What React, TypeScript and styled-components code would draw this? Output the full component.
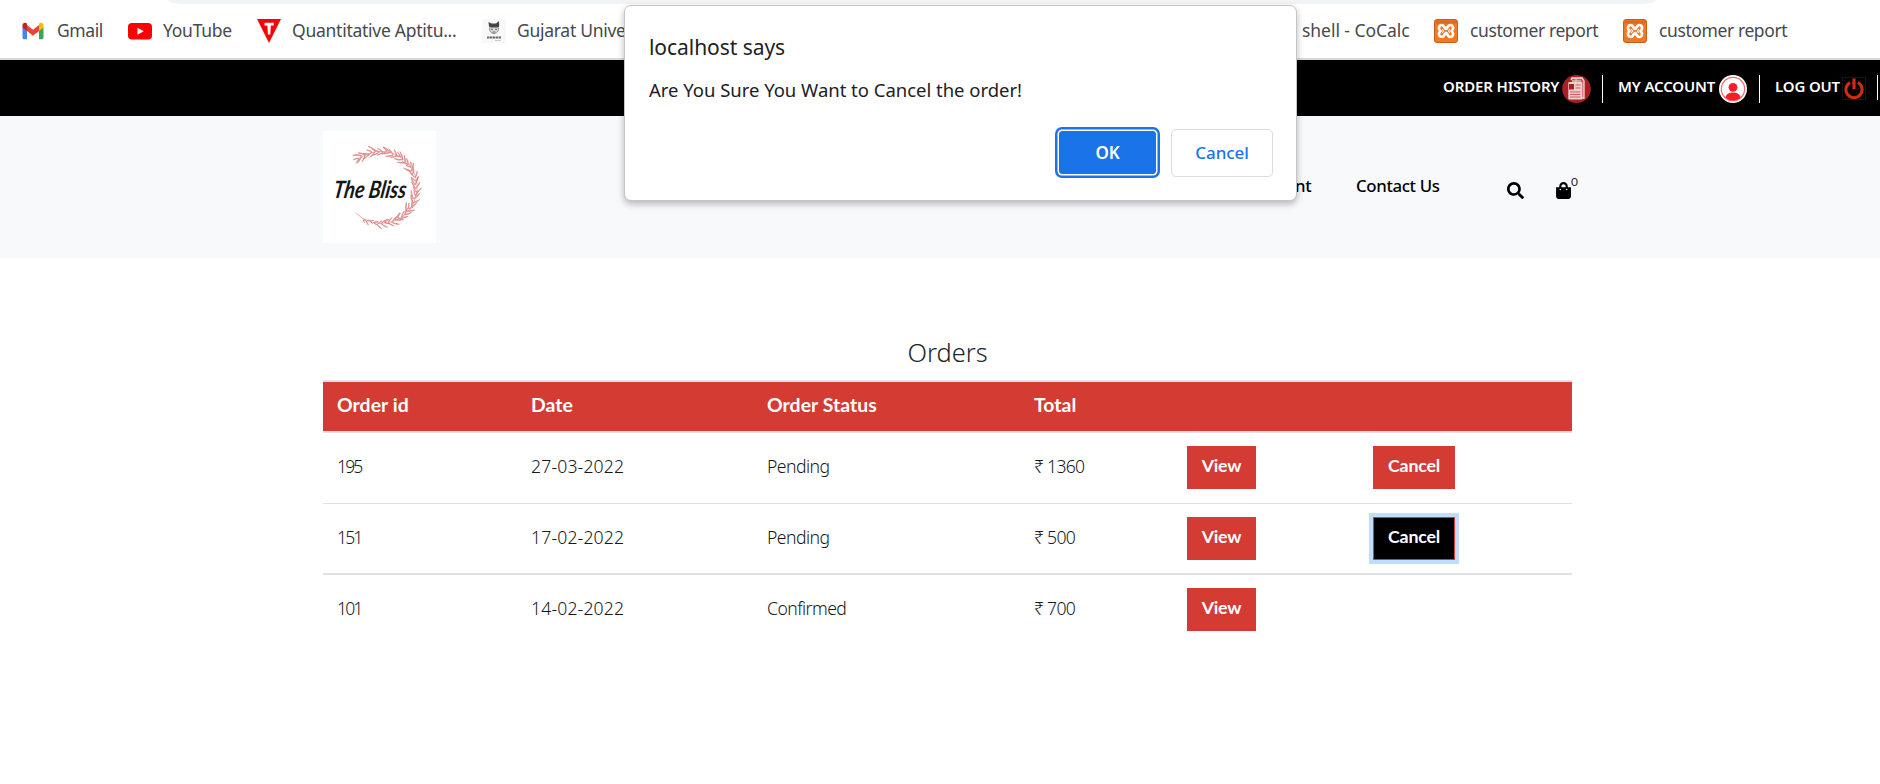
import React from "react";
import styled, { createGlobalStyle, css } from "styled-components";
import { FaSearch, FaShoppingBag } from "react-icons/fa";

const GlobalStyle = createGlobalStyle`
  * { box-sizing: border-box; }
  body { margin: 0; background: #fff; color: #212529; font-family: Lato, "Open Sans", sans-serif; overflow: hidden; }
`;

const ui = `"Noto Sans", "Open Sans", sans-serif`;

const Page = styled.div`
  position: relative;
  width: 1880px;
  height: 784px;
  overflow: hidden;
`;

/* Browser strip */
const BrowserBar = styled.div`
  display: flex;
  flex-direction: column;
  height: 60px;
  border-bottom: 2px solid #d9d9d9;
`;
const AddressEdge = styled.div`
  height: 4px;
  margin: 0 224px 0 168px;
  background: #f1f3f4;
  border-radius: 0 0 16px 16px / 0 0 4px 4px;
`;
const Bookmarks = styled.div`
  flex: 1;
  display: flex;
  justify-content: space-between;
  padding: 0 93px 0 21px;
`;
const BookmarkGroup = styled.div`
  display: flex;
  align-items: center;
  gap: 26px;
`;
const Bookmark = styled.div<{ $gap?: number }>`
  display: flex;
  align-items: center;
  gap: ${(p) => p.$gap ?? 11}px;
  svg { display: block; flex: none; }
`;
const BookmarkLabel = styled.span<{ $w: number; $ls?: number }>`
  width: ${(p) => p.$w}px;
  margin-top: -2px;
  font: 400 17.5px/24px ${ui};
  letter-spacing: ${(p) => p.$ls ?? -0.4}px;
  color: #46494d;
  white-space: nowrap;
`;

/* Account strip */
const TopBar = styled.div`
  display: flex;
  justify-content: flex-end;
  height: 56px;
  padding: 15px 2px 0 0;
  background: #000;
`;
const TopLink = styled.a<{ $w: number; $indent?: number; $short?: boolean }>`
  display: flex;
  align-items: flex-start;
  width: ${(p) => p.$w}px;
  height: ${(p) => (p.$short ? 25 : 28)}px;
  padding-left: ${(p) => p.$indent ?? 0}px;
  border-right: 1.5px solid #fff;
  color: #fff;
  svg { display: block; flex: none; margin-top: ${(p) => (p.$short ? 2 : 0)}px; }
`;
const TopLabel = styled.span<{ $w: number }>`
  width: ${(p) => p.$w}px;
  margin-top: -1px;
  font: 600 15px/24px ${ui};
  letter-spacing: -0.15px;
  white-space: nowrap;
`;

/* Site header */
const Header = styled.header`
  display: flex;
  height: 142px;
  padding: 15px 302px 0 323px;
  background: #f8f9fb;
`;
const Logo = styled.div`
  width: 113px;
  height: 112px;
  background: #fff;
`;
const Nav = styled.nav`
  display: flex;
  align-items: flex-start;
  margin-left: auto;
  padding-top: 43px;
`;
const NavLink = styled.a<{ $w: number }>`
  width: ${(p) => p.$w}px;
  font: 500 16.8px/24px ${ui};
  letter-spacing: -0.35px;
  color: #000;
  white-space: nowrap;
`;
const IconLink = styled.a<{ $w: number }>`
  display: flex;
  width: ${(p) => p.$w}px;
  padding-top: 8px;
  color: #000;
`;
const CartCount = styled.sup`
  margin-top: -7px;
  font: 400 12px/14px Lato, sans-serif;
  color: #212529;
`;

/* Orders */
const Content = styled.main`
  width: 1249px;
  margin: 78px 0 0 323px;
`;
const Title = styled.h4`
  margin: 0 0 12px;
  font: 300 25.4px/32px ${ui};
  text-align: center;
`;
const Table = styled.table`
  width: 100%;
  table-layout: fixed;
  border-collapse: separate;
  border-spacing: 0;
`;
const HeadCell = styled.th<{ $w: number }>`
  width: ${(p) => p.$w}px;
  height: 53px;
  padding: 0 14px 4px;
  border-top: 2px solid #dee2e6;
  border-bottom: 2px solid #dee2e6;
  background: #d43b33;
  background-clip: padding-box;
  color: #fff;
  font: 700 19.4px/24px Lato, sans-serif;
  letter-spacing: 0.05px;
  text-align: left;
`;
const Cell = styled.td<{ $line: number; $ls?: number }>`
  height: ${(p) => 70 + p.$line - (p.$line === 1 ? 1 : 0)}px;
  padding: 13px 14px 0;
  vertical-align: top;
  ${(p) => p.$line > 0 && css`border-top: ${p.$line}px solid #dee2e6;`}
  color: #16191c;
  font: 300 17.6px/40px ${ui};
  letter-spacing: ${(p) => p.$ls ?? -0.55}px;
  white-space: nowrap;
`;
const OrderButton = styled.button<{ $w: number; $focused?: boolean }>`
  display: block;
  width: ${(p) => p.$w}px;
  height: 43px;
  padding: 0 0 5px;
  border: 1px solid #d43b33;
  background: ${(p) => (p.$focused ? "#000" : "#d43b33")};
  box-shadow: ${(p) => (p.$focused ? "0 0 0 4px #bfdeff" : "none")};
  color: #fff;
  font: 700 17.8px/24px Lato, sans-serif;
  letter-spacing: -0.2px;
`;

/* Confirm dialog */
const Dialog = styled.div`
  position: absolute;
  left: 624px;
  top: 5px;
  width: 673px;
  height: 196px;
  padding: 26px 23px 0 24px;
  display: flex;
  flex-direction: column;
  border: 1px solid #c3c6c8;
  border-radius: 7px;
  background: #fff;
  box-shadow: 0 3px 7px rgba(0, 0, 0, 0.28);
  color: #202124;
  font-family: ${ui};
`;
const DialogTitle = styled.div`
  font-size: 21px;
  line-height: 30px;
  letter-spacing: -0.05px;
`;
const DialogText = styled.div`
  margin-top: 15px;
  font-size: 18.5px;
  line-height: 26px;
  letter-spacing: -0.02px;
`;
const DialogActions = styled.div`
  display: flex;
  justify-content: flex-end;
  gap: 15px;
  margin-top: 26px;
`;
const DialogButton = styled.button<{ $primary?: boolean }>`
  width: 102px;
  height: 48px;
  padding: 0;
  border: 1px solid #dadce0;
  border-radius: 5px;
  background: #fff;
  color: #1a73e8;
  font: 500 17px/24px ${ui};
  letter-spacing: -0.1px;
  ${(p) =>
    p.$primary &&
    css`
      width: 97px;
      height: 43px;
      margin: 2px 0;
      border-color: #1a73e8;
      border-radius: 3px;
      background: #1a73e8;
      box-shadow: 0 0 0 1.5px #fff, 0 0 0 4px #1a73e8;
      color: #fff;
      font-weight: 600;
    `}
`;

const GmailIcon = () => (
  <svg width="24" height="24" viewBox="0 0 24 24">
    <path d="M1.5 8v10.8c0 .8.6 1.4 1.4 1.4H6V9z" fill="#4285f4" />
    <path d="M22.5 8v10.8c0 .8-.6 1.4-1.4 1.4H18V9z" fill="#34a853" />
    <path d="M6 6l6 4.8L18 6v6l-6 4.8L6 12z" fill="#ea4335" />
    <path d="M1.5 8.6V6.4c0-2.6 2.6-3.4 4.5-1.8V12z" fill="#c5221f" />
    <path d="M22.5 8.6V6.4c0-2.6-2.6-3.4-4.5-1.8V12z" fill="#fbbc04" />
  </svg>
);
const YouTubeIcon = () => (
  <svg width="24" height="24" viewBox="0 0 24 24">
    <rect y="4" width="24" height="16.5" rx="4" fill="#f00" />
    <path d="M9.5 8.7v7l6.2-3.5z" fill="#fff" />
  </svg>
);
const TriangleIcon = () => (
  <svg width="24" height="24" viewBox="0 0 24 24">
    <path d="M0 0h24L12 24z" fill="#f50404" />
    <path d="M7.5 3.8h9.2v2.8h-2.9l-.5 9h-2.4l-.5-9H7.5z" fill="#fff" />
  </svg>
);
const UniversityIcon = () => (
  <svg width="24" height="24" viewBox="0 0 24 24">
    <rect width="24" height="24" fill="#f8f8f8" />
    <path d="M7 7.5L6.5 3l3 1.5H14L17 2l.2 5.5-2 1.5H9z" fill="#444" />
    <path d="M7.5 8.5c0 4 2 6 4.5 6s4.5-2 4.5-6" fill="#ddd" stroke="#888" />
    <path d="M9 10.3h2M13 10.3h2M10.5 13h3" stroke="#666" />
    <path d="M5 18.5h14" stroke="#666" strokeWidth="2" strokeDasharray="2.4 .5" />
    <path d="M13 21.5h6" stroke="#ccc" />
  </svg>
);
const XamppIcon = () => (
  <svg width="24" height="24" viewBox="0 0 24 24">
    <rect x="0.5" y="0.5" width="23" height="23" rx="2.5" fill="#f5771f" stroke="#c4601c" />
    <path d="M1.5 1.5h21v3h-21z" fill="#dd6a20" />
    <g fill="none" stroke="#fff" strokeWidth="2.7" strokeLinecap="round" strokeLinejoin="round">
      <path d="M12 9.8C10.500 9.800 10.300 6 7.800 6S4.400 9 5.200 10.200L6.500 12l-1.300 1.800C4.400 15 5.300 18 7.800 18s2.700-3.800 4.200-3.800" />
      <path d="M12 9.800C13.500 9.800 13.700 6 16.200 6s3.400 3 2.600 4.200L17.500 12l1.300 1.800c.8 1.200-.1 4.200-2.600 4.200s-2.700-3.800-4.200-3.800" />
      <path d="M8.500 10.500l1 1.500-1 1.500M15.500 10.500l-1 1.500 1 1.500" strokeWidth="1.200" />
    </g>
  </svg>
);
const HistoryIcon = () => (
  <svg width="29" height="28" viewBox="0 0 29 28">
    <ellipse cx="14.5" cy="14" rx="14.3" ry="14" fill="#a82024" />
    <path d="M9 5l1-2h10l2 3v17h-2" fill="#c45b5d" stroke="#f4dcdc" strokeWidth="1.3" />
    <rect x="6.3" y="7" width="14" height="17.5" rx="1" fill="#f0cfcf" />
    <rect x="7" y="9" width="5" height="5.5" fill="#a82024" />
    <path d="M13.5 10h5M13.5 13h5M8 17h10.500M8 19.500h10.500M8 22h10.500" stroke="#c45b5d" strokeWidth="1.1" />
    <path d="M10 6h9M14 4v3" stroke="#f4dcdc" />
  </svg>
);
const AccountIcon = () => (
  <svg width="28" height="28" viewBox="0 0 28 28">
    <circle cx="14" cy="14" r="14" fill="#fff" />
    <circle cx="14" cy="14" r="11.7" fill="#fff" stroke="#f4676c" strokeWidth="1.2" />
    <circle cx="14" cy="12.3" r="4.4" fill="#fb1d26" />
    <path d="M6.5 22.5c.5-3.5 3.5-5 7.5-5s7 1.5 7.5 5c-4 3.800-11 3.800-15 0z" fill="#fb1d26" />
  </svg>
);
const PowerIcon = () => (
  <svg width="24" height="24" viewBox="0 0 24 24">
    <rect x="0.5" y="0.5" width="23" height="22" fill="none" stroke="#151515" />
    <path d="M8 5.5a8.100 8.100 0 1 0 8 0" fill="none" stroke="#d42a14" strokeWidth="3" />
    <path d="M12 1.5v10.5" stroke="#d42a14" strokeWidth="3.2" />
  </svg>
);

/* Open ring of leaf sprigs, drawn pair by pair along the arc */
const Wreath = () => {
  const leaves: string[] = [];
  for (let i = 0; i <= 42; i++) {
    const a = ((-126 + i * 5.8) * Math.PI) / 180;
    const r = 36 + Math.sin(i * 1.7);
    const x = 57 + r * Math.cos(a);
    const y = 56.5 + r * Math.sin(a);
    const taper = i > 36 ? 1 - (i - 36) * 0.1 : 1;
    for (const side of [-1, 1]) {
      const len = (5.6 + ((i * 7) % 4)) * taper;
      const back = a - Math.PI / 2 + side * (0.4 + (i % 3) * 0.15);
      const bend = back + side * 0.35;
      leaves.push(
        `M${x.toFixed(1)} ${y.toFixed(1)}Q${(x + len * 0.6 * Math.cos(bend)).toFixed(1)} ${(y + len * 0.6 * Math.sin(bend)).toFixed(1)} ${(x + len * Math.cos(back)).toFixed(1)} ${(y + len * Math.sin(back)).toFixed(1)}Z`
      );
    }
  }
  return (
    <>
      <path d="M36 28A36 36 0 1 1 33 82" fill="none" stroke="#e09595" strokeWidth="0.8" />
      <path d={leaves.join("")} fill="#efb9b9" stroke="#dc8585" strokeWidth="0.7" />
    </>
  );
};
const BlissLogo = () => (
  <svg width="113" height="112" viewBox="0 0 113 112">
    <Wreath />
    <text
      x="10"
      y="67"
      textLength="73"
      lengthAdjust="spacingAndGlyphs"
      transform="skewX(-9) translate(10 0)"
      fontFamily="Lato, sans-serif"
      fontStyle="italic"
      fontWeight="700"
      fontSize="24"
      fill="#161616"
      stroke="#fff"
      strokeWidth="1.5"
      paintOrder="stroke"
    >
      The Bliss
    </text>
  </svg>
);

const columns = [
  { label: "Order id", w: 194 },
  { label: "Date", w: 236 },
  { label: "Order Status", w: 267 },
  { label: "Total", w: 153 },
  { label: "", w: 186 },
  { label: "", w: 213 },
];
const orders = [
  { id: "195", date: "27-03-2022", status: "Pending", total: "₹ 1360", line: 0, cancel: true, focused: false },
  { id: "151", date: "17-02-2022", status: "Pending", total: "₹ 500", line: 1, cancel: true, focused: true },
  { id: "101", date: "14-02-2022", status: "Confirmed", total: "₹ 700", line: 2, cancel: false, focused: false },
];

export default function App() {
  return (
    <Page>
      <GlobalStyle />
      <BrowserBar>
        <AddressEdge />
        <Bookmarks>
          <BookmarkGroup>
            <Bookmark $gap={12}><GmailIcon /><BookmarkLabel $w={45} $ls={-0.4}>Gmail</BookmarkLabel></Bookmark>
            <Bookmark><YouTubeIcon /><BookmarkLabel $w={68} $ls={-0.25}>YouTube</BookmarkLabel></Bookmark>
            <Bookmark><TriangleIcon /><BookmarkLabel $w={164} $ls={-0.26}>Quantitative Aptitu...</BookmarkLabel></Bookmark>
            <Bookmark><UniversityIcon /><BookmarkLabel $w={107} $ls={-0.28}>Gujarat Unive</BookmarkLabel></Bookmark>
          </BookmarkGroup>
          <BookmarkGroup>
            <Bookmark><BookmarkLabel $w={106} $ls={-0.05}>shell - CoCalc</BookmarkLabel></Bookmark>
            <Bookmark $gap={12}><XamppIcon /><BookmarkLabel $w={127}>customer report</BookmarkLabel></Bookmark>
            <Bookmark $gap={12}><XamppIcon /><BookmarkLabel $w={128}>customer report</BookmarkLabel></Bookmark>
          </BookmarkGroup>
        </Bookmarks>
      </BrowserBar>

      <TopBar>
        <TopLink $w={160}><TopLabel $w={119}>ORDER HISTORY</TopLabel><HistoryIcon /></TopLink>
        <TopLink $w={157} $indent={15}><TopLabel $w={101}>MY ACCOUNT</TopLabel><AccountIcon /></TopLink>
        <TopLink $w={118} $indent={15} $short><TopLabel $w={67}>LOG OUT</TopLabel><PowerIcon /></TopLink>
      </TopBar>

      <Header>
        <Logo><BlissLogo /></Logo>
        <Nav>
          <NavLink $w={61}>nt</NavLink>
          <NavLink $w={151}>Contact Us</NavLink>
          <IconLink $w={49}><FaSearch size={17} /></IconLink>
          <IconLink $w={22}><FaShoppingBag size={17} /><CartCount>0</CartCount></IconLink>
        </Nav>
      </Header>

      <Content>
        <Title>Orders</Title>
        <Table>
          <thead>
            <tr>{columns.map((c, i) => <HeadCell key={i} $w={c.w}>{c.label}</HeadCell>)}</tr>
          </thead>
          <tbody>
            {orders.map((o) => (
              <tr key={o.id}>
                <Cell $line={o.line} $ls={-1.9}>{o.id}</Cell>
                <Cell $line={o.line} $ls={0.15}>{o.date}</Cell>
                <Cell $line={o.line}>{o.status}</Cell>
                <Cell $line={o.line} $ls={-0.75}>{o.total}</Cell>
                <Cell $line={o.line}><OrderButton $w={69}>View</OrderButton></Cell>
                <Cell $line={o.line}>
                  {o.cancel && <OrderButton $w={82} $focused={o.focused}>Cancel</OrderButton>}
                </Cell>
              </tr>
            ))}
          </tbody>
        </Table>
      </Content>

      <Dialog role="dialog">
        <DialogTitle>localhost says</DialogTitle>
        <DialogText>Are You Sure You Want to Cancel the order!</DialogText>
        <DialogActions>
          <DialogButton $primary>OK</DialogButton>
          <DialogButton>Cancel</DialogButton>
        </DialogActions>
      </Dialog>
    </Page>
  );
}
